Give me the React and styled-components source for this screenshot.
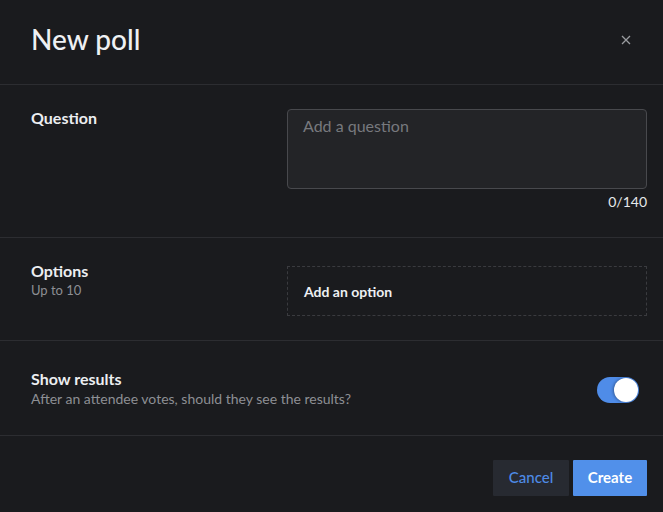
import React from "react";
import styled, { createGlobalStyle } from "styled-components";

const Global = createGlobalStyle`
  html, body { margin: 0; padding: 0; background: #1a1b1e; }
  body { font-family: Lato, "Open Sans", sans-serif; color: #e8eaed; }
  * { box-sizing: border-box; }
`;

const Dialog = styled.div`
  width: 663px;
  height: 512px;
  background: #1a1b1e;
  display: flex;
  flex-direction: column;
`;

const Header = styled.header`
  height: 85px;
  padding: 0 32px 0 31px;
  display: flex;
  align-items: center;
  justify-content: space-between;
  border-bottom: 1px solid #2c2d31;
`;

const Title = styled.h1`
  margin: 0;
  font-size: 28px;
  font-weight: 500;
  color: #eef0f3;
  letter-spacing: 0;
  padding-bottom: 7px;
`;

const CloseButton = styled.button`
  background: none;
  border: 0;
  padding: 0;
  width: 10px;
  height: 10px;
  display: flex;
  align-items: center;
  justify-content: center;
  color: #9a9ca0;
  margin-top: -4px;
  cursor: pointer;
`;

const Section = styled.section`
  display: grid;
  grid-template-columns: 256px 1fr;
  align-items: start;
  padding: ${(p) => p.$pad};
  padding-left: 31px;
  padding-right: 16px;
  border-bottom: 1px solid #2c2d31;
`;

const LabelBlock = styled.div`
  display: flex;
  flex-direction: column;
  gap: 2px;
  margin-top: ${(p) => p.$top || 0}px;
`;

const Label = styled.div`
  font-size: 16px;
  font-weight: 700;
  color: #eceef1;
  line-height: 18px;
`;

const Hint = styled.div`
  font-size: ${(p) => p.$size || 14}px;
  color: #8d8f94;
  line-height: 17px;
`;

const Field = styled.div`
  display: flex;
  flex-direction: column;
  align-items: stretch;
`;

const TextArea = styled.textarea`
  height: 80px;
  resize: none;
  background: #232427;
  border: 1px solid #48494d;
  border-radius: 4px;
  padding: 6px 15px;
  font-family: Lato, sans-serif;
  font-size: 16px;
  color: #e8eaed;
  outline: none;
  &::placeholder { color: #77797e; }
`;

const Counter = styled.div`
  text-align: right;
  font-size: 14px;
  color: #e6e8eb;
  margin-top: 4px;
  line-height: 18px;
`;

const AddOption = styled.div`
  height: 50px;
  border: 1px dashed #3a3b3f;
  display: flex;
  align-items: center;
  padding-left: 16px;
  font-size: 14px;
  font-weight: 700;
  color: #eef0f3;
`;

const ToggleRow = styled.section`
  display: flex;
  align-items: center;
  justify-content: space-between;
  padding: 29px 24px 28px 31px;
  border-bottom: 1px solid #2c2d31;
`;

const Switch = styled.div`
  width: 42px;
  height: 26px;
  border-radius: 13px;
  background: #4f8ce8;
  position: relative;
  margin-top: 2px;
`;

const Knob = styled.span`
  position: absolute;
  top: 1px;
  right: 1px;
  width: 24px;
  height: 24px;
  border-radius: 50%;
  background: #ffffff;
  box-shadow: -1px 0 3px rgba(0, 0, 0, 0.35);
`;

const Footer = styled.footer`
  flex: 1;
  display: flex;
  justify-content: flex-end;
  align-items: flex-start;
  gap: 4px;
  padding: 24px 16px 0 0;
`;

const Button = styled.button`
  height: 36px;
  width: ${(p) => (p.$primary ? 74 : 76)}px;
  padding: 0 0 2px;
  border: 0;
  border-radius: 1px;
  font-family: Lato, sans-serif;
  font-size: 15px;
  font-weight: ${(p) => (p.$primary ? 700 : 500)};
  background: ${(p) => (p.$primary ? "#5190ea" : "#272a31")};
  color: ${(p) => (p.$primary ? "#ffffff" : "#4e8ae6")};
  cursor: pointer;
`;

export default function App() {
  return (
    <>
      <Global />
      <Dialog>
        <Header>
          <Title>New poll</Title>
          <CloseButton aria-label="Close">
            <svg width="10" height="10" viewBox="0 0 10 10">
              <path d="M1 1L9 9M9 1L1 9" stroke="currentColor" strokeWidth="1.3" />
            </svg>
          </CloseButton>
        </Header>
        <Section $pad="24px 0 26px">
          <LabelBlock>
            <Label>Question</Label>
          </LabelBlock>
          <Field>
            <TextArea placeholder="Add a question" />
            <Counter>0/140</Counter>
          </Field>
        </Section>
        <Section $pad="28px 0 24px">
          <LabelBlock $top={-4}>
            <Label>Options</Label>
            <Hint $size={13}>Up to 10</Hint>
          </LabelBlock>
          <Field>
            <AddOption>Add an option</AddOption>
          </Field>
        </Section>
        <ToggleRow>
          <LabelBlock>
            <Label>Show results</Label>
            <Hint>After an attendee votes, should they see the results?</Hint>
          </LabelBlock>
          <Switch>
            <Knob />
          </Switch>
        </ToggleRow>
        <Footer>
          <Button>Cancel</Button>
          <Button $primary>Create</Button>
        </Footer>
      </Dialog>
    </>
  );
}
